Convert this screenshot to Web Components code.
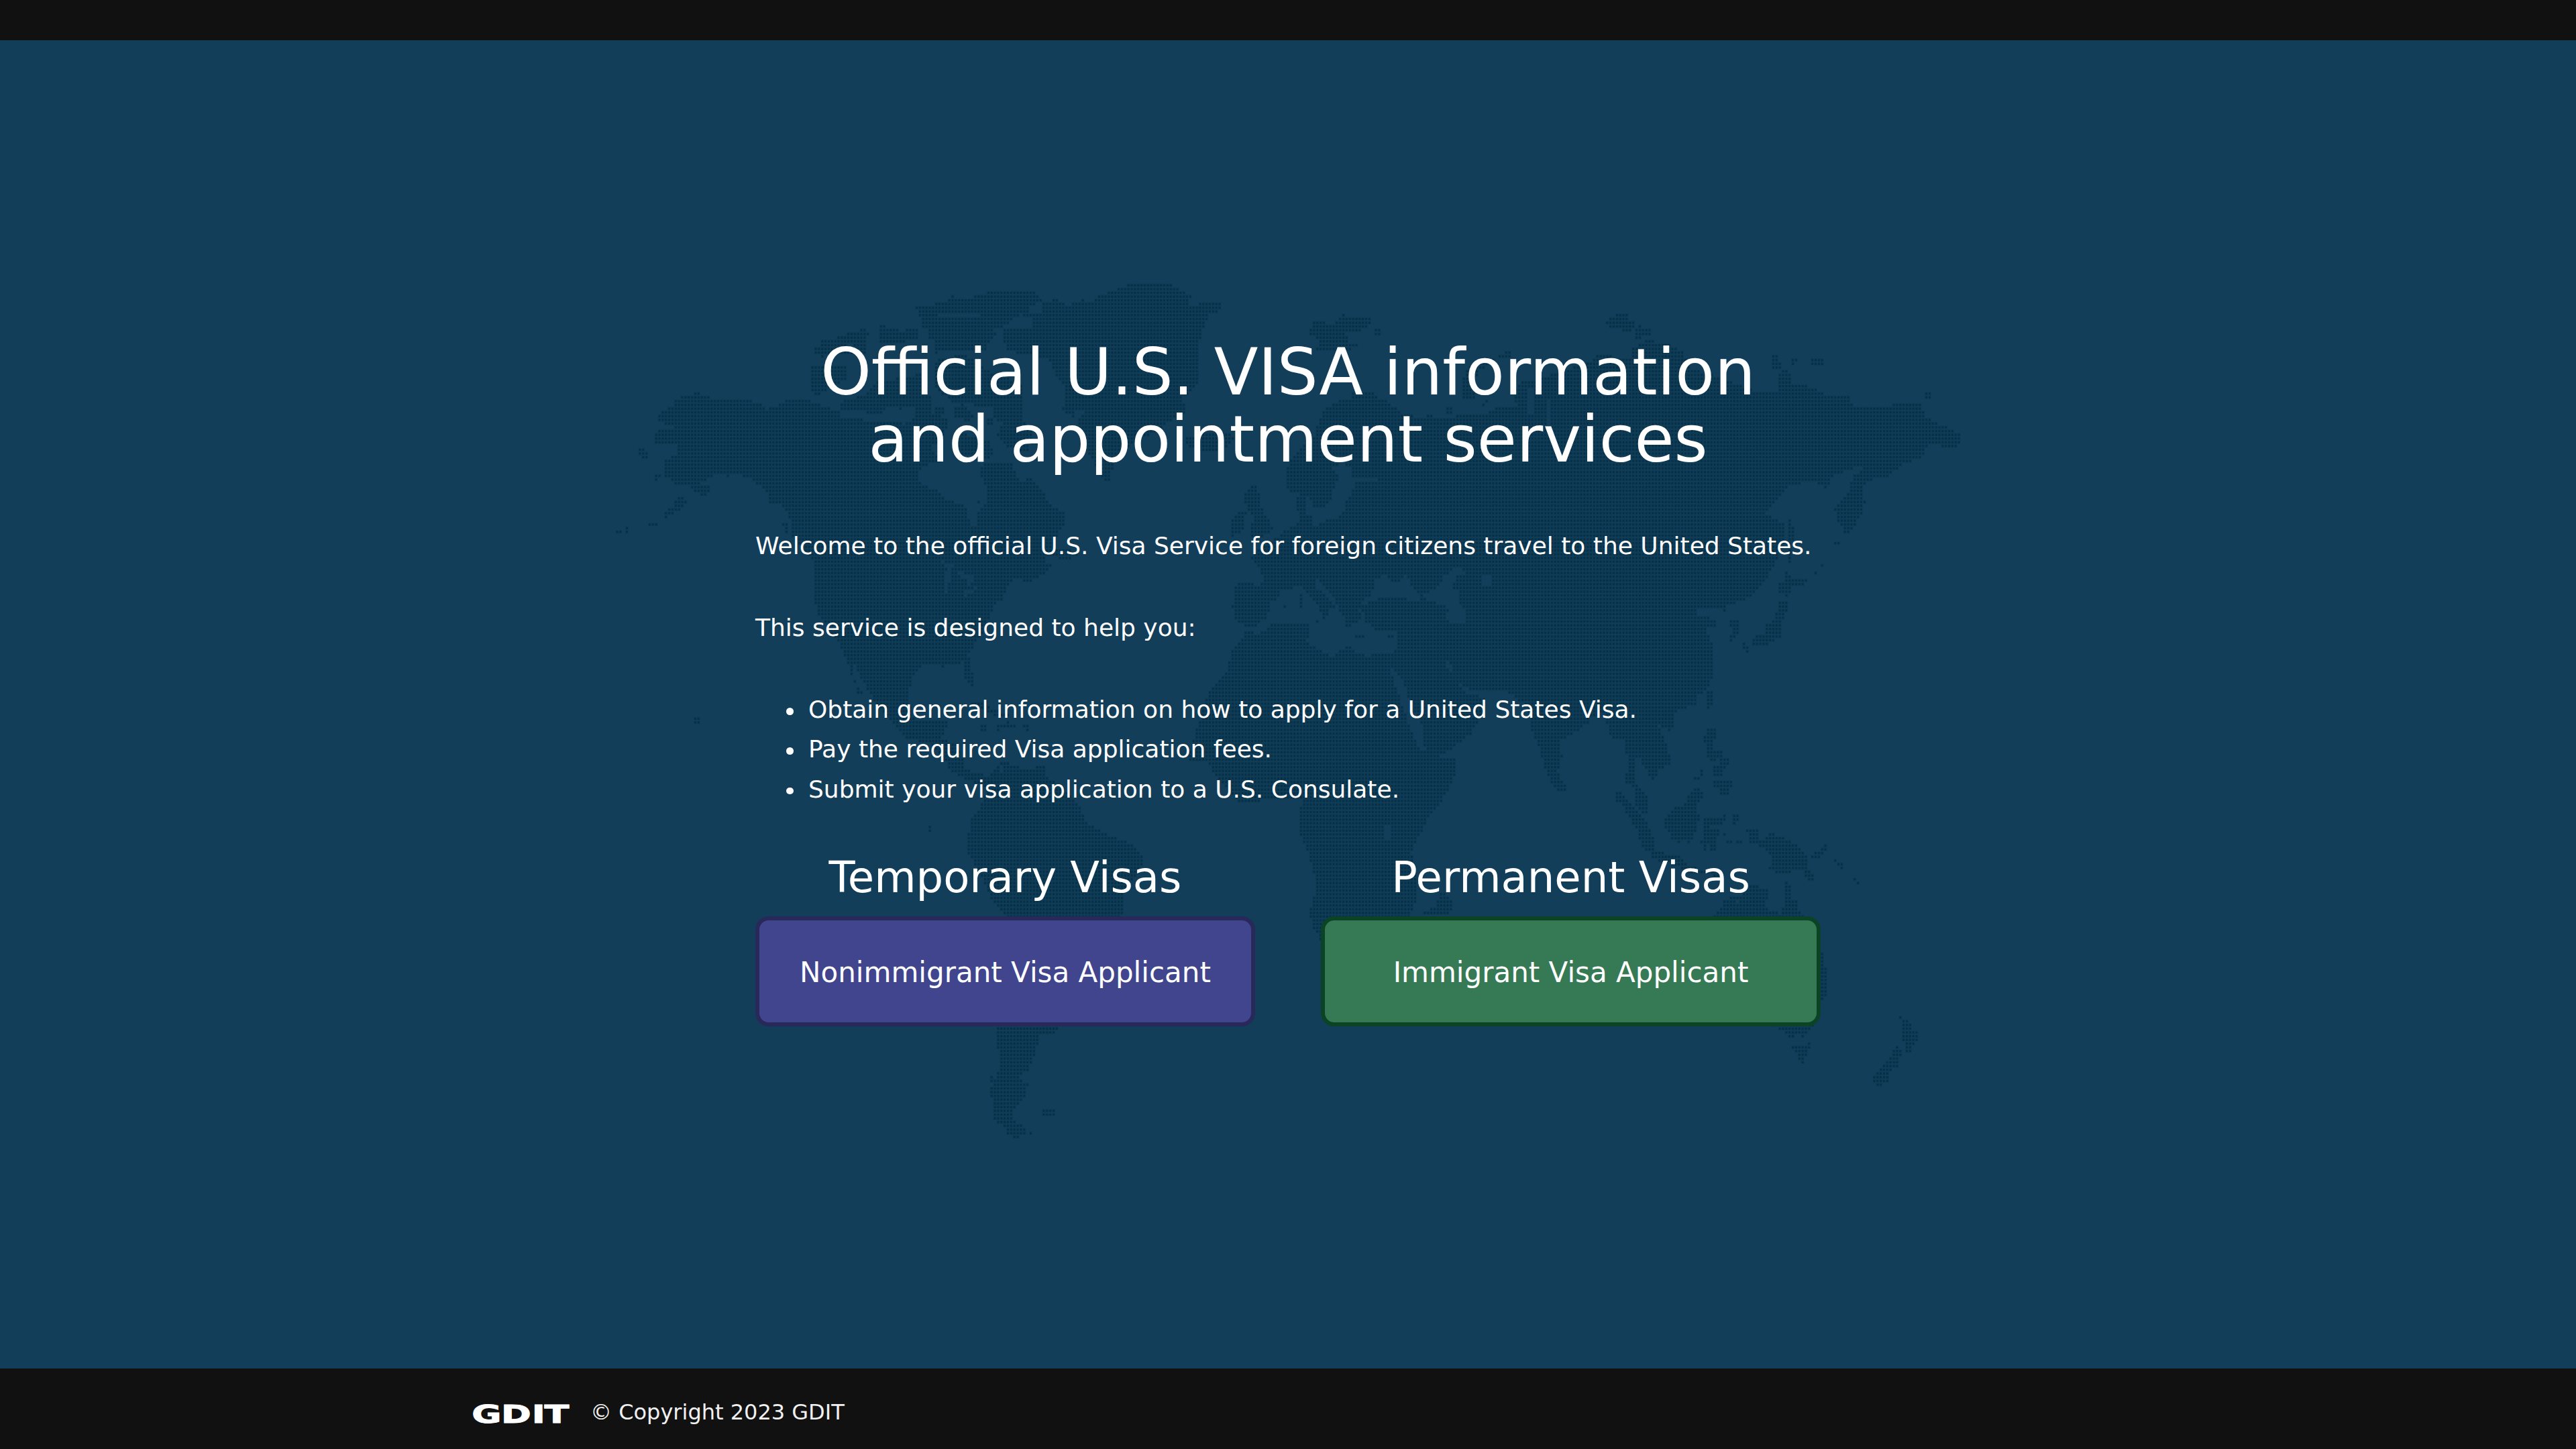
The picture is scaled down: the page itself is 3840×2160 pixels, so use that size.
<!DOCTYPE html>
<html lang="en">
<head>
<meta charset="utf-8">
<title>Official U.S. Visa Information and Appointment Services</title>
<style>
html,body{margin:0;height:100%;background:#111}
body{font-family:"DejaVu Sans",sans-serif;color:#fff}
li{list-style:none;position:relative}
li::before{content:"";position:absolute;left:-33px;top:27px;width:10.6px;height:10.6px;border-radius:50%;background:#fff}
</style>
</head>
<body>
<visa-page>
  <visa-intro>
    <span slot="title">Official U.S. VISA information<br>and appointment services</span>
    <p>Welcome to the official U.S. Visa Service for foreign citizens travel to the United States.</p>
    <p>This service is designed to help you:</p>
    <ul>
      <li>Obtain general information on how to apply for a United States Visa.</li>
      <li>Pay the required Visa application fees.</li>
      <li>Submit your visa application to a U.S. Consulate.</li>
    </ul>
  </visa-intro>
  <visa-choice slot="choice" kind="temporary"><span slot="heading">Temporary Visas</span>Nonimmigrant Visa Applicant</visa-choice>
  <visa-choice slot="choice" kind="permanent"><span slot="heading">Permanent Visas</span>Immigrant Visa Applicant</visa-choice>
  <site-footer slot="footer">© Copyright 2023 GDIT</site-footer>
</visa-page>
<script>
/* World outline, split in sheets. Each sheet has its own origin and scale. */
const SHEETS = [
 {o:[900,400], s:[1.4255,2.24],
  land:[
   "105,545 135,540 160,535 118,510 118,480 150,460 150,440 180,425 195,415 220,428 235,438 300,440 325,447 345,472 362,465 375,447 410,437 430,440 455,452 475,465 500,478 505,495 540,500 560,515 620,510 640,520 660,500 665,455 690,460 700,490 730,500 725,560 690,600 720,640 675,662 665,690 675,720 710,745 725,770 770,795 775,830 780,860 793,862 797,808 812,790 815,740 803,700 803,660 830,645 868,650 875,690 890,712 905,690 925,730 950,790 978,815 980,850 965,890 950,945 985,940 1010,950 990,975 955,960 920,975 950,985 948,1005 915,1035 900,1050 870,1030 860,1060 845,1105 830,1130 810,1200 785,1260 773,1290 785,1370 783,1405 767,1370 765,1315 720,1330 680,1320 655,1360 648,1430 652,1480 590,1480 560,1400 525,1300 532,1370 553,1430 542,1425 512,1290 495,1240 480,1210 455,1150 448,1100 445,970 400,900 395,830 380,790 350,760 335,730 310,700 275,685 265,697 245,680 230,695 200,717 150,718 130,690 125,640 155,625 155,590 110,585",
   "183,720 227,722 215,772 205,750 195,755 190,740","160,765 182,775 170,800 150,808 148,790","143,795 160,800 135,832 123,828","95,850 115,850 115,858 95,858","22,874 38,874 38,884 22,884","46,865 51,865 51,884 46,884",
   "76,600 84,602 93,615 93,635 76,632","110,685 120,690 114,710 110,705","345,730 365,760 378,790 355,785","380,835 388,850 390,882 384,880",
   "930,120 960,103 990,125 1020,103 1037,120 1045,95 1075,82 1110,58 1205,54 1218,70 1250,92 1238,130 1280,115 1315,118 1312,140 1285,155 1275,200 1260,260 1265,330 1260,390 1230,430 1235,485 1200,510 1180,540 1150,560 1110,600 1085,650 1075,708 1062,708 1040,640 1020,600 1010,550 1005,505 1025,480 1005,465 1000,495 975,475 985,410 960,350 945,300 900,290 860,275 850,240 850,205 912,200 910,165 885,160 895,145 930,150",
   "1235,565 1300,545 1340,560 1325,600 1285,615 1245,600",
   "663,130 710,118 735,105 740,92 752,105 790,95 825,80 918,80 932,105 905,130 880,160 850,190 825,205 835,225 780,245 740,235 700,220 675,190 672,160",
   "178,1460 184,1465 184,1472","192,1490 204,1498 204,1518 193,1520",
   "755,1440 790,1445 860,1490 875,1502 830,1490 790,1460","788,776 800,776 800,784 788,784"
  ],
  sea:["700,150 800,150 800,163 735,160 700,158","600,455 625,460 625,480 600,480","725,1010 737,1000 733,1085 724,1085","750,1010 780,1020 790,1035 775,1065 770,1035 755,1030","770,1070 800,1062 785,1090 765,1095","695,985 720,978 750,992 745,1000"]},
 {o:[1180,410], s:[3,3],
  land:[
   "130,292 205,280 260,260 320,242 345,245 345,270 330,290 330,350 240,360 180,340 130,380 130,350 105,350 105,325 130,320",
   "395,225 418,225 430,242 480,242 480,255 510,255 512,242 565,242 565,290 500,295 450,300 400,305","600,262 760,270 900,270 870,330 640,345 640,300",
   "90,410 240,400 245,460 180,500 125,535 90,530","220,580 240,562 320,540 380,480 600,440 600,500 630,560 630,610 585,615 570,580 510,580 490,615 470,590 425,590 410,615 340,620 330,600 225,600",
   "650,370 780,360 900,440 1030,490 1030,570 1030,640 1080,700 1060,780 1010,800 960,760 920,720 950,660 905,640 910,585 820,580 720,565 640,500","730,590 770,580 820,630 800,650 730,635","640,590 690,595 690,620 640,615","870,640 910,650 900,670 875,665","720,700 880,740 910,800 880,822 760,800 730,750"
  ],
  sea:["245,300 270,300 270,330 245,330"]},
 {o:[900,1050], s:[1.4255,2.24],
  land:[
   "585,0 650,0 652,30 665,60 700,50 730,50 725,95 715,115 745,130 760,160 765,215 800,232 820,245 845,195 870,200 890,213 935,217 945,250 970,265 985,300 1010,330 1022,390 1065,430 1105,455 1140,490 1145,530 1125,580 1105,640 1108,700 1050,760 1010,850 985,980 965,1080 955,1098 925,1098 920,1145 912,1185 903,1220 880,1245 903,1270 890,1320 870,1350 870,1390 895,1415 895,1435 880,1447 860,1437 848,1405 830,1390 828,1340 822,1290 838,1225 845,1190 835,1130 838,1080 838,900 855,710 825,650 800,560 775,500 773,460 780,390 805,330 815,280 765,245 735,215 730,190 690,130 640,110",
   "932,1353 957,1355 955,1375 942,1382 932,1370","690,403 695,403 696,425 690,425","800,68 812,68 812,88 803,88","830,70 860,60 877,68 875,80 835,84","892,68 902,68 902,88 892,85","903,1425 909,1425 909,1434 903,1434","822,1240 828,1240 828,1260 822,1260","920,205 936,205 936,225 920,222"
  ],
  sea:["843,200 850,200 850,230 843,230"]},
 {o:[1800,600], s:[3,3],
  land:[
   "-20,1380 0,1310 60,1230 95,1185 105,1110 155,1060 170,1025 230,1040 290,993 450,990 445,1080 500,1110 570,1152 590,1100 640,1098 665,1120 720,1140 760,1122 830,1118 850,1090 850,1015 750,1015 738,990 705,985 700,930 715,900 735,880 800,870 850,860 950,870 1080,920 1070,970 1115,990 1160,960 1160,700 1560,700 1560,1320 1450,1370 1370,1290 1210,1280 1170,1285 1110,1240 1090,1165 1060,1160 1120,1265 1160,1300 1240,1320 1220,1400 1180,1475 1100,1540 1000,1600 -90,1600 -60,1500",
   "355,300 380,250 415,200 480,150 500,80 518,40 580,10 700,-30 800,-10 860,45 950,75 1560,40 1560,1000 1160,950 1060,800 950,870 730,860 690,895 705,930 670,920 690,970 640,1002 620,980 590,930 570,880 530,835 495,790 470,800 480,820 550,890 570,915 530,925 540,945 510,975 505,920 450,850 415,820 360,835 325,830 320,870 275,895 270,950 240,980 210,1000 150,990 122,975 122,940 108,915 122,880 122,825 150,808 240,818 250,790 240,750 210,710 190,690 230,650 290,620 330,590 370,560 410,545 490,550 530,530 585,525 590,500 620,470 620,420 650,400 660,360 760,350 760,325 650,315 640,290 600,270 555,300 590,335 580,375 550,400 550,440 520,465 480,475 455,430 430,398 375,398 355,370",
   "190,380 215,375 235,410 235,460 270,520 292,560 280,590 200,600 190,545 215,525 185,490 165,440 170,405","105,525 135,495 175,490 165,520 155,575 110,600","400,410 440,405 430,500 470,510 460,560 410,555","165,373 173,373 173,382 165,382","150,390 162,390 162,400 150,400","240,322 248,322 248,332 240,332",
   "475,975 510,975 505,985 475,985","415,855 428,855 428,930 415,930","312,922 320,922 320,934 312,934","340,905 352,905 352,918 340,918","560,430 580,430 575,448 560,448","458,490 466,490 466,502 458,502","660,1040 700,1040 700,1050 660,1050","805,1040 830,1040 825,1052 808,1052","615,990 640,990 640,1000 615,1000","35,1208 43,1208 43,1217 35,1217","6,1225 14,1225 14,1235 6,1235","165,1030 180,1025 220,1040 170,1050"
  ],
  sea:[
   "730,865 745,800 790,765 805,765 820,800 860,795 885,770 920,825 955,870 930,890 870,872 800,858 745,890","1045,780 1080,760 1100,728 1160,750 1150,765 1110,775 1095,830 1130,850 1130,900 1160,940 1155,990 1110,990 1070,975 1065,940 1085,915 1045,860 1060,825","1228,772 1270,770 1270,820 1222,815","555,300 600,270 650,295 640,420 560,450 570,380 590,335",
   "808,1180 850,1200 880,1260 900,1330 960,1440 975,1560 950,1560 900,1440 860,1330 830,1240"
  ]},
 {o:[1900,400], s:[1.4255,2.24],
  land:[
   "30,700 30,660 60,600 100,560 100,485 115,465 140,445 165,435 165,415 205,415 245,460 285,515 300,520 325,490 345,495 330,525 360,535 380,530 380,500 400,492 450,490 470,465 515,470 510,400 525,380 570,365 620,340 680,305 690,285 730,300 760,300 760,270 780,250 790,240 830,250 870,285 880,330 950,370 1020,410 1070,420 1075,335 1095,350 1095,385 1130,390 1165,420 1220,430 1230,460 1240,470 1295,470 1310,455 1375,455 1380,490 1410,520 1450,545 1462,570 1440,607 1400,580 1383,600 1380,625 1340,650 1300,695 1260,710 1245,735 1255,780 1245,830 1225,870 1215,885 1200,850 1190,800 1215,760 1225,730 1228,700 1260,655 1230,665 1190,690 1170,735 1155,715 1100,718 1080,750 1055,790 1042,820 1080,850 1083,920 1060,1000 1025,1080 990,1115 960,1120 960,1160 985,1180 990,1230 975,1225 965,1165 945,1130 900,1130 898,1165 937,1170 935,1195 915,1205 930,1260 932,1350 920,1400 890,1440 870,1465 830,1490 845,1520 840,1545 820,1530 810,1500 820,1568 715,1568 700,1480 640,1530 600,1568 550,1568 540,1470 500,1415 430,1400 430,700",
   "75,222 80,178 125,185 145,155 160,168 205,168 200,190 180,212 150,210 155,245 180,255 150,275 90,275 95,235 75,222","213,203 226,203 226,222 213,222",
   "705,175 725,155 750,153 748,175 765,180 765,205 740,210 725,195 705,195","765,205 775,190 800,208 798,222 775,235 762,228",
   "480,290 505,265 505,290 460,310 430,350 425,430 400,440 400,370 410,330","365,465 377,465 377,485 365,485","443,445 453,440 450,460 443,458",
   "1058,290 1070,292 1075,335 1058,335","1099,300 1110,300 1104,322 1099,320","1140,300 1166,300 1166,320 1133,320","1384,415 1392,415 1400,430 1384,435",
   "1092,835 1100,850 1102,890 1097,960 1102,1005 1092,980 1090,900","1188,910 1200,910 1200,920 1188,920","1162,990 1166,990 1166,997 1162,997","1147,1015 1152,1015 1152,1022 1147,1022","1130,1030 1137,1030 1137,1040 1120,1060 1118,1045",
   "1085,1010 1095,1030 1115,1040 1118,1055 1098,1065 1092,1095 1072,1080 1072,1055 1086,1050","1072,1115 1088,1115 1088,1150 1078,1180 1075,1230 1045,1258 1015,1258 1012,1240 1040,1220 1045,1190 1065,1170",
   "966,1225 978,1230 975,1243 966,1243","995,1248 1005,1255 1007,1290 1000,1295","918,1410 932,1410 930,1465 920,1465"
  ],
  sea:["540,400 550,400 550,490 540,490","580,430 586,430 586,520 580,520","725,295 732,295 735,330 725,330"]},
 {o:[1900,1050], s:[1.4255,2.24],
  land:[
   "-147,60 285,65 300,130 318,190 385,178 385,220 365,300 330,370 310,430 290,490 300,560 303,650 290,700 200,950 130,950 100,800 85,750 75,700 85,640 85,570 70,480 55,430 55,350 60,320 25,315 -75,325 -125,240 -140,200",
   "360,620 378,655 372,705 318,705 318,690 345,675 350,640","300,60 430,60 430,70 390,110 380,130 345,165 325,160","545,30 655,50 670,55 640,90 605,125 610,175 600,230 620,270 618,295 605,295 580,240 568,180 555,110",
   "1098,1140 1115,1145 1140,1128 1130,1170 1126,1198 1118,1198 1110,1165","1118,1100 1124,1100 1124,1112 1118,1112",
   "1320,1015 1335,1050 1352,1065 1352,1090 1366,1090 1366,1120 1350,1160 1340,1155 1336,1110 1336,1075","1320,1140 1330,1155 1328,1205 1305,1230 1303,1258 1282,1275 1272,1260 1272,1242 1290,1215 1310,1180"
  ],
  sea:["232,405 248,402 249,440 238,455 232,440","275,705 290,695 300,710"]},
 {o:[2380,1040], s:[3,3],
  land:[
   "-10,-10 450,-10 445,25 385,48 355,65 285,72 260,92 255,125 285,150 310,200 325,260 330,300 270,320 265,355 248,362 235,345 215,310 195,262 165,262 165,360 190,405 225,440 228,510 205,515 175,485 175,420 160,390 130,380 130,345 145,325 145,260 130,250 130,160 90,160 95,195 75,180 85,160 65,140 50,100",
   "305,75 345,75 343,130 322,148 305,130","495,140 532,140 532,180 515,200 520,238 560,240 562,265 520,280 495,262 495,225 480,190",
   "540,285 570,272 592,272 590,300 575,315 560,345 522,348 522,310 550,300","525,370 575,378 585,355 592,372 605,372 603,400 590,432 552,432 550,400 525,398","495,290 502,290 480,315 472,360 435,365 437,355 460,350 470,320",
   "440,405 460,405 475,430 470,448 450,468 440,500 460,525 460,548 445,560 445,600 430,632 415,650 405,635 375,635 365,650 340,632 320,600 303,580 303,545 320,522 350,488 390,480 420,430",
   "85,425 110,425 125,440 150,480 195,525 225,565 240,595 255,625 257,682 220,682 200,650 175,580 130,510 110,470 85,462","250,690 300,690 300,705 385,710 400,750 470,770 560,780 560,795 440,790 330,740 270,730 248,715",
   "480,540 560,540 568,522 577,525 575,550 555,565 500,568 495,590 545,590 545,610 525,625 532,650 545,680 510,682 505,655 490,655 488,682 480,680 465,645 480,610","612,522 635,507 632,548 618,580 610,575","565,605 577,605 577,616 565,616","580,640 606,640 606,650 580,650","624,640 662,640 662,650 624,650",
   "668,590 722,588 720,635 755,640 757,622 770,605 792,605 800,622 825,625 865,640 890,660 940,700 935,735 955,775 985,808 950,815 920,770 865,765 860,785 820,782 770,765 790,735 770,690 730,662 685,648 685,610 668,600",
   "960,706 975,690 1005,690 1015,660 1027,655 1025,680 990,716 962,714","975,622 985,625 997,648 990,645","1048,706 1065,706 1073,733 1065,733","1078,740 1098,742 1098,780 1092,775","1120,757 1128,757 1128,766 1120,766","1150,772 1158,772 1158,782 1150,782","1136,790 1145,790 1175,832 1165,832","713,707 721,707 721,730 713,730","583,740 590,740 590,750 583,750","668,740 676,740 676,750 668,750",
   "490,0 518,0 518,30 500,45 492,40",
   "500,1000 525,970 545,945 580,905 600,890 640,890 690,842 720,840 725,855 767,857 765,895 750,920 755,940 810,960 812,975 828,975 830,940 845,925 845,825 855,825 868,840 870,905 897,910 897,935 912,960 950,1030 1000,1120 1012,1160 1028,1225 1028,1330 1005,1350 970,1470 940,1500 925,1520 915,1500 880,1505 878,1532 870,1530 860,1500 840,1495 810,1475 600,1400 500,1300"
  ],
  sea:["615,895 635,895 630,920 615,918"]}
];
const COLS = 424, ROWS = 230, X0 = 915.04, Y0 = 425.4, DX = 4.855, DY = 5.568;
const BAR = 60;

const make = (name, html, setup) => customElements.define(name, class extends HTMLElement {
  constructor(){
    super();
    const t = document.createElement('template');
    t.innerHTML = html;
    this.attachShadow({mode:'open'}).append(t.content.cloneNode(true));
    if (setup) setup(this.shadowRoot);
  }
});

make('dotted-world', `
<style>:host{display:block;position:absolute;inset:0;pointer-events:none}svg{display:block;width:100%;height:100%}</style>
<svg viewBox="0 60 3840 1980" aria-hidden="true"><path class="tint" fill="#0c3953" opacity=".42"/><path class="dots" fill="#052f49" opacity=".9"/></svg>`,
root => {
  const c = document.createElement('canvas'); c.width = COLS; c.height = ROWS;
  const g = c.getContext('2d', {willReadFrequently:true});
  const fill = (sheet, text) => {
    g.beginPath();
    text.split(' ').forEach(p => {
      const [x,y] = p.split(',').map(Number);
      g.lineTo((sheet.o[0]+x/sheet.s[0]-X0)/DX+.5, (sheet.o[1]+y/sheet.s[1]-Y0)/DY+.5);
    });
    g.fill();
  };
  for (const s of SHEETS) s.land.forEach(p => fill(s,p));
  g.globalCompositeOperation = 'destination-out';
  for (const s of SHEETS) s.sea.forEach(p => fill(s,p));
  const a = g.getImageData(0,0,COLS,ROWS).data;
  let dots = '', tint = '';
  for (let r=0;r<ROWS;r++) for (let k=0;k<COLS;k++) if (a[(r*COLS+k)*4+3] > 105) {
    const x = X0+k*DX, y = Y0+r*DY;
    dots += `M${(x-1.5).toFixed(1)} ${(y-1.6).toFixed(1)}h3v3.2h-3z`;
    tint += `M${(x-2.43).toFixed(2)} ${(y-2.79).toFixed(2)}h4.86v5.57h-4.86z`;
  }
  root.querySelector('.dots').setAttribute('d', dots);
  root.querySelector('.tint').setAttribute('d', tint);
});

make('visa-page', `
<style>
:host{display:flex;flex-direction:column;height:2160px;width:100%}
header{height:${BAR}px;background:#111;flex:none}
main{position:relative;flex:1;background:#133e59;display:flex;flex-direction:column;align-items:center;padding-top:445px;box-sizing:border-box}
.col{position:relative;width:1588px}
.choices{display:grid;grid-template-columns:1fr 1fr;gap:98px;margin-top:64px}
</style>
<header></header>
<main><dotted-world></dotted-world><div class="col"><slot></slot><div class="choices"><slot name="choice"></slot></div></div></main>
<slot name="footer"></slot>`);

make('visa-intro', `
<style>
:host{display:block;font-size:36px;line-height:59.4px}
h1{font-weight:400;font-size:96px;line-height:100px;text-align:center;margin:0 0 79px}
::slotted(p){margin:0 0 62.6px}
::slotted(ul){margin:0;padding-left:79px}
</style>
<h1><slot name="title"></slot></h1><slot></slot>`);

make('visa-choice', `
<style>
:host{display:flex;flex-direction:column}
h2{font-weight:400;font-size:64px;line-height:76px;text-align:center;margin:0 0 20px}
a{display:flex;align-items:center;justify-content:center;height:164px;box-sizing:border-box;border:6px solid #29285a;border-radius:20px;background:#41458e;font-size:42px;color:#fff;padding-top:2px}
:host([kind=permanent]) a{background:#367a55;border-color:#0b4424}
</style>
<h2><slot name="heading"></slot></h2><a role="button"><slot></slot></a>`);

make('site-footer', `
<style>
:host{display:flex;align-items:center;gap:29px;height:120px;flex:none;box-sizing:border-box;padding:10px 0 0 705px;background:#111;font-size:32px;color:#f0f0f0}
svg{display:block;width:146px;height:28px;overflow:visible;margin-top:4px}
text{font:700 37.2px "DejaVu Sans",sans-serif;fill:#fff;stroke:#fff;stroke-width:1}
</style>
<svg viewBox="0 0 146 28" role="img"><text transform="scale(1.45 1)" x="-1.2 29 60.5 73.4" y="27.6">GDIT</text></svg>
<span><slot></slot></span>`);
</script>
</body>
</html>
